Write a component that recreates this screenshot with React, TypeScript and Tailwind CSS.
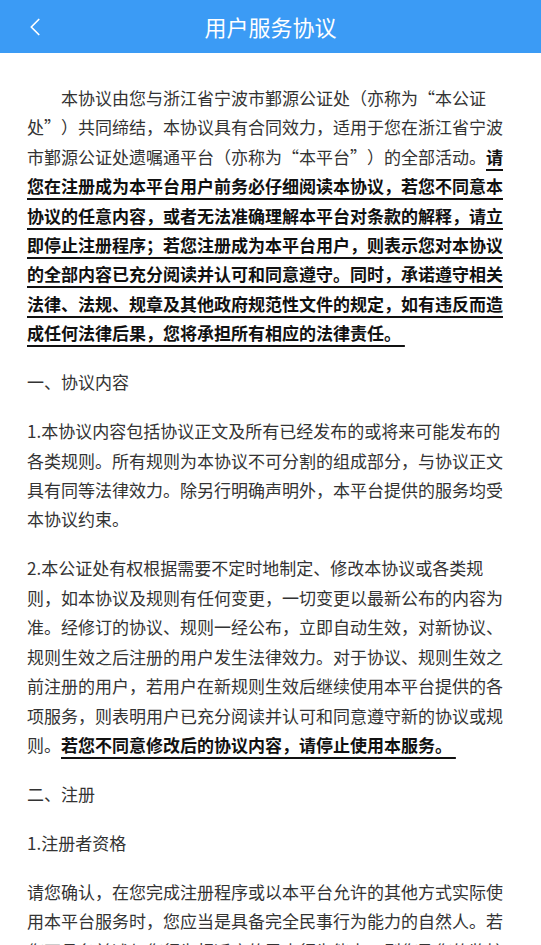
import { ChevronLeft } from 'lucide-react';

const font = { fontFamily: '"Noto Sans CJK SC", "Noto Sans", sans-serif' };

const Strong = ({ children }: { children: React.ReactNode }) => (
  <span className="font-bold text-[#111] underline underline-offset-[5px] decoration-[1.5px]">{children}</span>
);

// full-width quotes, as the CJK fonts on phones draw them
const Open = () => <span className="inline-block w-[1em] indent-0 text-right">“</span>;
const Close = () => <span className="inline-block w-[1em] indent-0 text-left">”</span>;

export default function App() {
  return (
    <div className="min-h-screen bg-white" style={font}>
      <header className="relative flex h-[53px] items-center justify-center bg-[#3b9bf5]">
        <button className="absolute left-[20px] top-1/2 -translate-y-1/2 text-white">
          <ChevronLeft className="h-[30px] w-[30px]" strokeWidth={1.4} />
        </button>
        <h1 className="text-[22px] font-normal text-white">用户服务协议</h1>
      </header>

      <main className="px-[27px] pt-[30px] text-[17px] leading-[29.4px] text-[#333]">
        <p className="mb-[19.6px] indent-[2em]">
          本协议由您与浙江省宁波市鄞源公证处（亦称为<span className="whitespace-nowrap"><Open />本</span>公证<span className="whitespace-nowrap">处<Close />）</span>共同缔结，本协议具有合同效力，适用于您在浙江省宁波市鄞源公证处遗嘱通平台（亦称为<span className="whitespace-nowrap"><Open />本</span>平<span className="whitespace-nowrap">台<Close />）</span>的全部活动。
          <Strong>
            请您在注册成为本平台用户前务必仔细阅读本协议，若您不同意本协议的任意内容，或者无法准确理解本平台对条款的解释，请立即停止注册程序；若您注册成为本平台用户，则表示您对本协议的全部内容已充分阅读并认可和同意遵守。同时，承诺遵守相关法律、法规、规章及其他政府规范性文件的规定，如有违反而造成任何法律后果，您将承担所有相应的法律责任。&nbsp;
          </Strong>
        </p>
        <p className="mb-[19.6px]">一、协议内容</p>
        <p className="mb-[19.6px]">
          1.本协议内容包括协议正文及所有已经发布的或将来可能发布的各类规则。所有规则为本协议不可分割的组成部分，与协议正文具有同等法律效力。除另行明确声明外，本平台提供的服务均受本协议约束。
        </p>
        <p className="mb-[19.6px]">
          2.本公证处有权根据需要不定时地制定、修改本协议或各类规则，如本协议及规则有任何变更，一切变更以最新公布的内容为准。经修订的协议、规则一经公布，立即自动生效，对新协议、规则生效之后注册的用户发生法律效力。对于协议、规则生效之前注册的用户，若用户在新规则生效后继续使用本平台提供的各项服务，则表明用户已充分阅读并认可和同意遵守新的协议或规则。
          <Strong>若您不同意修改后的协议内容，请停止使用本服务。&nbsp;</Strong>
        </p>
        <p className="mb-[19.6px]">二、注册</p>
        <p className="mb-[19.6px]">1.注册者资格</p>
        <p className="mb-[19.6px]">
          请您确认，在您完成注册程序或以本平台允许的其他方式实际使用本平台服务时，您应当是具备完全民事行为能力的自然人。若您不具备前述与您行为相适应的民事行为能力，则您及您的监护人应依照法律规定承担因此而导致的一切后果。
        </p>
      </main>
    </div>
  );
}
